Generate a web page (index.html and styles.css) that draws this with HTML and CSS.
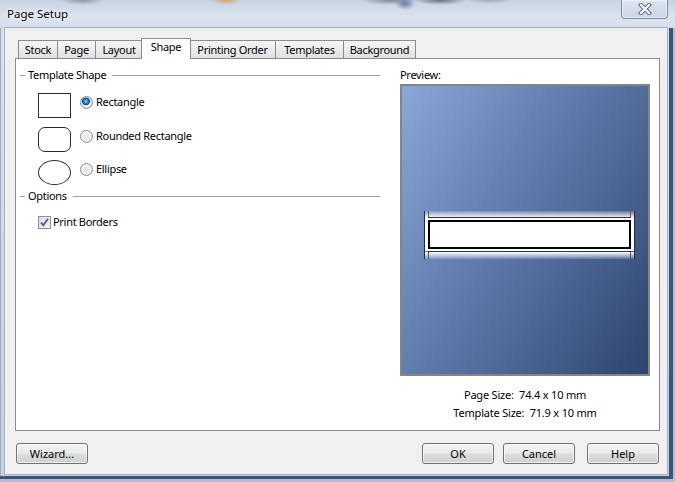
FILE: index.html
```html
<!DOCTYPE html>
<html>
<head>
<meta charset="utf-8">
<title>Page Setup</title>
<link rel="stylesheet" href="styles.css">
</head>
<body>
<div class="window">
  <div class="titlebar">
    <span class="title">Page Setup</span>
    <div class="close">
      <svg width="14" height="12" viewBox="0 0 14 12">
        <path d="M3 2 L11 10 M11 2 L3 10" stroke="#5d6b80" stroke-width="4.2" stroke-linecap="square" fill="none"/>
        <path d="M3 2 L11 10 M11 2 L3 10" stroke="#ffffff" stroke-width="2.2" stroke-linecap="square" fill="none"/>
      </svg>
    </div>
  </div>
  <div class="client">
    <div class="tabs">
      <div class="tab tab-stock">Stock</div>
      <div class="tab tab-page">Page</div>
      <div class="tab tab-layout">Layout</div>
      <div class="tab active">Shape</div>
      <div class="tab tab-order">Printing Order</div>
      <div class="tab tab-templates">Templates</div>
      <div class="tab tab-background">Background</div>
    </div>
    <div class="panel">
      <div class="left">
        <div class="group-head"><span class="dash"></span><span class="head-text">Template Shape</span><span class="rule"></span></div>
        <div class="shape-row first">
          <div class="shape rect"></div>
          <div class="opt"><span class="radio checked"></span><span>Rectangle</span></div>
        </div>
        <div class="shape-row">
          <div class="shape rounded"></div>
          <div class="opt"><span class="radio"></span><span>Rounded Rectangle</span></div>
        </div>
        <div class="shape-row third">
          <div class="shape ellipse"></div>
          <div class="opt"><span class="radio"></span><span>Ellipse</span></div>
        </div>
        <div class="group-head options-head"><span class="dash"></span><span class="head-text">Options</span><span class="rule"></span></div>
        <div class="check-row">
          <span class="checkbox">
            <svg width="11" height="11" viewBox="0 0 11 11"><path d="M2 5.5 L4.3 8.3 L9 1.8" stroke="#4a5f94" stroke-width="1.9" fill="none"/></svg>
          </span>
          <span>Print Borders</span>
        </div>
      </div>
      <div class="right">
        <div class="preview-label">Preview:</div>
        <div class="preview-box">
          <svg class="label-svg" width="211" height="48" viewBox="0 0 211 48">
            <defs>
              <linearGradient id="gTop" x1="0" y1="0" x2="0" y2="1">
                <stop offset="0" stop-color="#ffffff" stop-opacity="0.15"/>
                <stop offset="1" stop-color="#ffffff" stop-opacity="1"/>
              </linearGradient>
              <linearGradient id="gBot" x1="0" y1="0" x2="0" y2="1">
                <stop offset="0" stop-color="#ffffff" stop-opacity="1"/>
                <stop offset="1" stop-color="#ffffff" stop-opacity="0.15"/>
              </linearGradient>
            </defs>
            <rect x="1" y="0" width="209" height="7" fill="url(#gTop)"/>
            <rect x="1" y="7" width="209" height="33" fill="#ffffff"/>
            <rect x="1" y="41" width="209" height="7" fill="url(#gBot)"/>
            <line x1="0.5" y1="0" x2="0.5" y2="48" stroke="#2a2a2a"/>
            <line x1="210.5" y1="0" x2="210.5" y2="48" stroke="#2a2a2a"/>
            <line x1="4.5" y1="0" x2="4.5" y2="7" stroke="#555"/>
            <line x1="206.5" y1="0" x2="206.5" y2="7" stroke="#555"/>
            <line x1="4.5" y1="40" x2="4.5" y2="48" stroke="#555"/>
            <line x1="206.5" y1="40" x2="206.5" y2="48" stroke="#555"/>
            <line x1="4" y1="6.5" x2="207" y2="6.5" stroke="#333"/>
            <line x1="4" y1="40.5" x2="207" y2="40.5" stroke="#333"/>
            <rect x="5" y="10" width="201" height="27" fill="#ffffff" stroke="#000" stroke-width="2"/>
          </svg>
        </div>
        <div class="size first-size">Page Size:  74.4 x 10 mm</div>
        <div class="size">Template Size:  71.9 x 10 mm</div>
      </div>
    </div>
    <div class="buttons">
      <button class="btn wizard">Wizard...</button>
      <button class="btn ok">OK</button>
      <button class="btn cancel">Cancel</button>
      <button class="btn help">Help</button>
    </div>
  </div>
</div>
</body>
</html>
```
FILE: styles.css
```css
html, body {
  margin: 0;
  padding: 0;
}

body {
  width: 675px;
  height: 482px;
  overflow: hidden;
  font-family: "Noto Sans", "Segoe UI", sans-serif;
  font-size: 11px;
  line-height: 16px;
  letter-spacing: -0.3px;
  color: #000;
  background: #c7d4e5;
}

.window {
  width: 675px;
  height: 482px;
  box-sizing: border-box;
  display: flex;
  flex-direction: column;
  background: linear-gradient(#cbd7e7, #d7e1ec 30px, #c3d1e2 100%);
  box-shadow: inset -2px -3px 0 #aebfd5, inset -6px -6px 0 #3f5576, inset 1px 0 0 #9aabc3;
}

.titlebar {
  height: 28px;
  flex: none;
  display: flex;
  align-items: flex-start;
  background:
    radial-gradient(ellipse 16px 5px at 226px 0, rgba(230, 150, 80, 0.85), rgba(230, 150, 80, 0) 100%),
    radial-gradient(ellipse 22px 5px at 82px 0, rgba(70, 70, 80, 0.45), rgba(70, 70, 80, 0) 100%),
    radial-gradient(ellipse 30px 5px at 390px 0, rgba(60, 60, 70, 0.5), rgba(60, 60, 70, 0) 100%),
    radial-gradient(ellipse 10px 6px at 405px 4px, rgba(40, 70, 140, 0.6), rgba(40, 70, 140, 0) 100%),
    radial-gradient(ellipse 26px 5px at 440px 0, rgba(40, 40, 50, 0.6), rgba(40, 40, 50, 0) 100%),
    radial-gradient(ellipse 24px 4px at 490px 0, rgba(90, 90, 100, 0.35), rgba(90, 90, 100, 0) 100%),
    linear-gradient(#c6d3e3, #dbe4ee 60%, #d4deea);
}

.title {
  margin: 6px 0 0 7px;
  font-size: 11.5px;
  letter-spacing: 0;
  line-height: 16px;
  color: #000;
  text-shadow: 0 0 6px #fff, 0 0 3px #fff;
}

.close {
  margin-left: auto;
  margin-right: 7px;
  width: 47px;
  height: 19px;
  box-sizing: border-box;
  border: 1px solid #7a8ca5;
  border-top: none;
  border-radius: 0 0 4px 4px;
  background: linear-gradient(#dde6f0, #c9d5e4);
  box-shadow: inset 0 0 0 1px rgba(255, 255, 255, 0.55);
  display: flex;
  align-items: center;
  justify-content: center;
}

.client {
  margin-left: 5px;
  width: 662px;
  height: 446px;
  box-sizing: border-box;
  background: #f0f0f0;
  padding: 10px 0 0 10px;
  box-shadow: 0 0 0 1px #a3b2c6;
}

.tabs {
  display: flex;
  align-items: flex-start;
  height: 21px;
  margin-left: 3px;
  margin-bottom: -1px;
}

.tab {
  height: 18px;
  margin-top: 2px;
  margin-right: -1px;
  box-sizing: border-box;
  border: 1px solid #898c95;
  border-bottom: none;
  padding: 0;
  text-align: center;
  line-height: 17px;
  background: linear-gradient(#f4f4f4, #ececec 50%, #e0e0e0);
  white-space: nowrap;
}

.tab-stock { width: 40px; }
.tab-page { width: 39px; }
.tab-layout { width: 48px; }
.tab-order { width: 87px; }
.tab-templates { width: 69px; }
.tab-background { width: 73px; }

.tab.active {
  width: 50px;
  height: 21px;
  margin-top: 0;
  margin-left: -1px;
  margin-right: -2px;
  line-height: 16px;
  background: #fff;
  z-index: 2;
}

.panel {
  width: 645px;
  height: 373px;
  box-sizing: border-box;
  border: 1px solid #898c95;
  background: #fff;
  display: grid;
  grid-template-columns: 365px 250px;
  column-gap: 19px;
  align-items: start;
  padding-top: 8px;
}

.group-head {
  display: flex;
  align-items: center;
  height: 16px;
}

.dash {
  width: 5px;
  height: 1px;
  margin-left: 4px;
  background: #a0a0a0;
}

.head-text {
  margin-left: 3px;
}

.rule {
  flex: 1;
  height: 1px;
  margin: 0 1px 0 6px;
  background: #a0a0a0;
}

.shape-row {
  display: flex;
  align-items: flex-start;
  margin: 9px 0 0 22px;
}

.shape-row.first {
  margin-top: 10px;
}

.shape-row.third {
  margin-top: 8px;
}

.shape {
  width: 33px;
  height: 25px;
  box-sizing: border-box;
  border: 1px solid #2b2b2b;
}

.rounded {
  border-radius: 7px;
}

.ellipse {
  border-radius: 50%;
}

.opt {
  display: flex;
  align-items: center;
  gap: 3px;
  height: 14px;
  margin: 2px 0 0 9px;
}

.radio {
  width: 13px;
  height: 13px;
  box-sizing: border-box;
  border-radius: 50%;
  border: 1px solid #8c8c8c;
  background: radial-gradient(circle at 50% 50%, #e2e2e2 0, #eeeeee 3px, #f8f8f8 5px, #d6d6d6 6px);
}

.radio.checked {
  border-color: #7f8fa0;
  background:
    radial-gradient(circle at 45% 40%, #9fe0ff 0, #3e9ad8 1.5px, #1d5ea8 3px, #0f3f80 3.6px, rgba(15, 63, 128, 0) 4.2px),
    radial-gradient(circle at 50% 50%, #e2e2e2 0, #f0f0f0 4px, #d8d8d8 6px);
}

.options-head {
  margin-top: 3px;
}

.check-row {
  display: flex;
  align-items: center;
  gap: 2px;
  height: 14px;
  margin: 11px 0 0 22px;
}

.checkbox {
  width: 13px;
  height: 13px;
  box-sizing: border-box;
  border: 1px solid #8e8f8f;
  background: linear-gradient(135deg, #dcdcdc, #f6f6f6);
  display: flex;
  align-items: center;
  justify-content: center;
}

.checkbox svg {
  display: block;
}

.preview-label {
  height: 16px;
  line-height: 16px;
}

.preview-box {
  margin-top: 1px;
  width: 250px;
  height: 292px;
  box-sizing: border-box;
  border: 2px solid #858585;
  background: linear-gradient(120deg, #8aa7d8 0%, #6683b4 35%, #4c6795 65%, #2e436d 100%);
  padding: 125px 0 0 22px;
}

.label-svg {
  display: block;
}

.size {
  text-align: center;
  line-height: 18px;
  white-space: pre;
  letter-spacing: -0.2px;
}

.first-size {
  margin-top: 10px;
}

.buttons {
  display: flex;
  width: 645px;
  margin-top: 12px;
}

.btn {
  width: 72px;
  height: 21px;
  box-sizing: border-box;
  padding: 0;
  border: 1px solid #707070;
  border-radius: 3px;
  background: linear-gradient(#f2f2f2 0%, #ebebeb 48%, #dddddd 52%, #cfcfcf 100%);
  box-shadow: inset 0 0 0 1px rgba(255, 255, 255, 0.7);
  font: inherit;
  line-height: 17px;
  color: #000;
}

.wizard {
  margin-left: 1px;
}

.ok {
  margin-left: auto;
}

.cancel {
  margin-left: 9px;
}

.help {
  margin-left: 12px;
  margin-right: 1px;
}
```
